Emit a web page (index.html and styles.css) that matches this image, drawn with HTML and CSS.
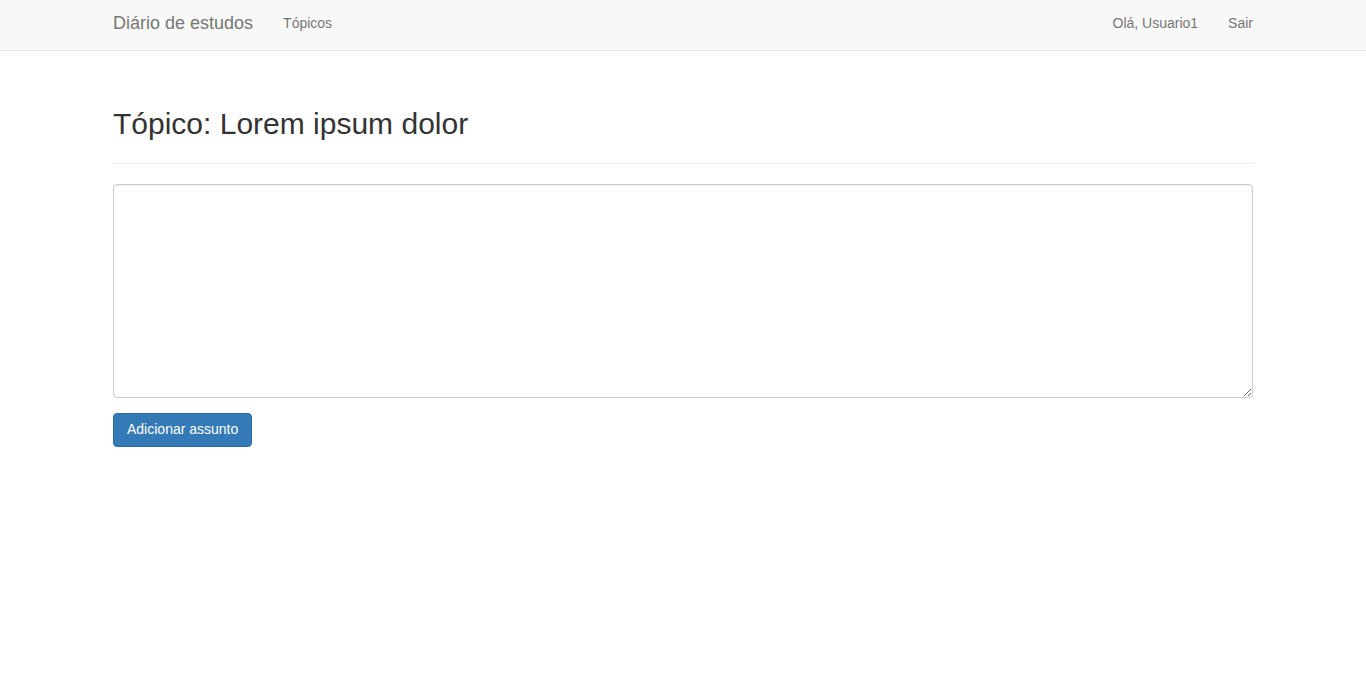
FILE: index.html
```html
<!DOCTYPE html>
<html lang="pt">
<head>
<meta charset="utf-8">
<title>Diário de estudos</title>
<link rel="stylesheet" href="styles.css">
</head>
<body>
<nav class="navbar">
  <div class="container nav-inner">
    <div class="nav-left">
      <a class="brand" href="#">Diário de estudos</a>
      <a class="nav-link" href="#">Tópicos</a>
    </div>
    <div class="nav-right">
      <a class="nav-link" href="#">Olá, Usuario1</a>
      <a class="nav-link" href="#">Sair</a>
    </div>
  </div>
</nav>
<main class="container">
  <div class="page-header">
    <h1>Tópico: Lorem ipsum dolor</h1>
  </div>
  <form class="entry-form">
    <textarea class="form-control"></textarea>
    <button type="button" class="btn-primary">Adicionar assunto</button>
  </form>
</main>
</body>
</html>
```
FILE: styles.css
```css
* { box-sizing: border-box; }
html, body { margin: 0; padding: 0; }
body {
  font-family: "Liberation Sans", Arial, Helvetica, sans-serif;
  font-size: 14px;
  line-height: 1.42857;
  color: #333;
  background: #fff;
}
a { text-decoration: none; }
.container {
  width: 1170px;
  margin: 0 auto;
  padding: 0 15px;
}
.navbar {
  height: 51px;
  background: #f8f8f8;
  border-bottom: 1px solid #e7e7e7;
}
.nav-inner {
  display: flex;
  justify-content: space-between;
  height: 50px;
}
.nav-left, .nav-right {
  display: flex;
  align-items: stretch;
}
.brand {
  font-size: 18px;
  line-height: 20px;
  padding: 13px 15px 15px 0;
  color: #777;
}
.nav-link {
  font-size: 14px;
  line-height: 20px;
  padding: 13px 15px 15px;
  color: #777;
}
.nav-right .nav-link:last-child { padding-right: 0; }
.page-header {
  margin-top: 56px;
  padding-bottom: 9px;
  border-bottom: 1px solid #eee;
  margin-bottom: 20px;
}
.page-header h1 {
  margin: 0 0 14px;
  font-size: 30px;
  font-weight: 400;
  line-height: 33px;
  color: #333;
}
.entry-form {
  display: flex;
  flex-direction: column;
  align-items: flex-start;
}
.form-control {
  display: block;
  width: 100%;
  height: 214px;
  padding: 6px 12px;
  border: 1px solid #ccc;
  border-radius: 4px;
  box-shadow: inset 0 1px 1px rgba(0,0,0,.075);
  font-family: inherit;
  font-size: 14px;
  margin: 0 0 15px;
  resize: vertical;
}
.btn-primary {
  font-family: inherit;
  font-size: 14px;
  line-height: 20px;
  padding: 5px 13px 7px;
  color: #fff;
  background: #337ab7;
  border: 1px solid #2e6da4;
  border-radius: 4px;
  cursor: pointer;
}
```
